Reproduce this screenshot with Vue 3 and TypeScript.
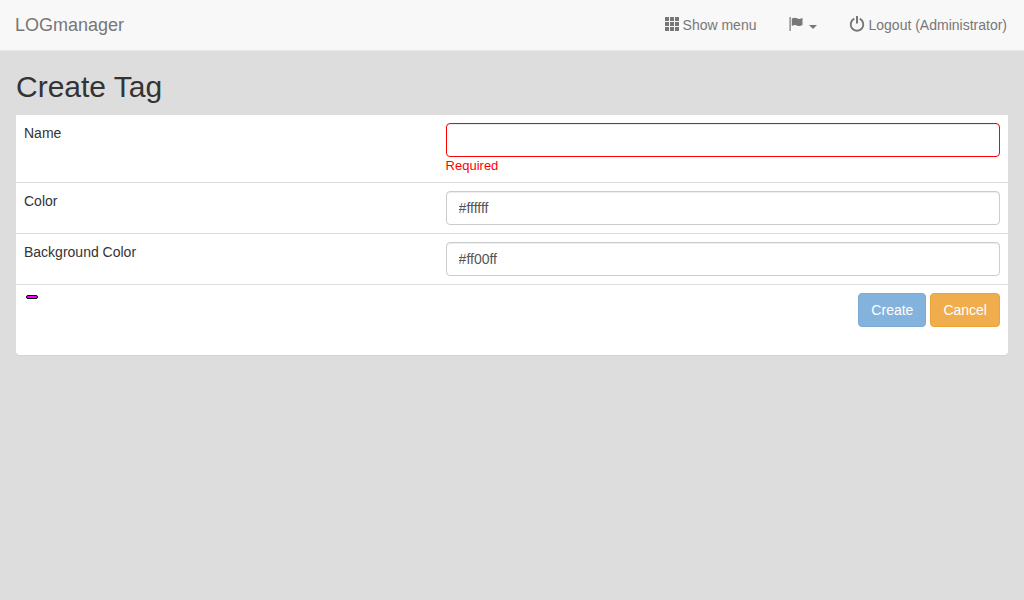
<script setup lang="ts">
import { computed, ref } from 'vue'

const name = ref('')
const color = ref('#ffffff')
const background = ref('#ff00ff')

const missingName = computed(() => name.value.trim() === '')

const cells = [0, 5, 10].flatMap((y) => [0, 5, 10].map((x) => ({ x, y })))
</script>

<template>
  <div class="page">
    <header class="navbar">
      <a class="brand" href="#">LOGmanager</a>
      <nav class="links">
        <a class="link" href="#menu">
          <svg class="icon" viewBox="0 0 14 14" aria-hidden="true" shape-rendering="crispEdges">
            <rect v-for="c in cells" :key="`${c.x}-${c.y}`" :x="c.x" :y="c.y" width="4" height="4" />
          </svg>
          <span>Show menu</span>
        </a>
        <a class="link" href="#language" aria-label="Language">
          <svg class="icon" viewBox="0 0 14 14" aria-hidden="true">
            <path d="M.5 0h1.200v14H.5z" />
            <path d="M2.800 1.500C5 .4 6.600 .5 8 1.300c1.500 .8 3.500 .8 5.500-.2v7c-2 1.200-4 1.200-5.600.4C6.400 7.700 5 7.800 2.800 9z" />
          </svg>
          <span class="caret"></span>
        </a>
        <a class="link" href="#logout">
          <svg class="icon" viewBox="0 0 14 14" aria-hidden="true">
            <path d="M4.300 1.700a6.300 6.300 0 1 0 5.400 0" fill="none" stroke="currentColor" stroke-width="1.900" />
            <path d="M6 -1h2v7.500H6z" />
          </svg>
          <span>Logout (Administrator)</span>
        </a>
      </nav>
    </header>

    <main class="content">
      <h1>Create Tag</h1>
      <form class="panel" novalidate @submit.prevent>
        <div class="row">
          <label for="tag-name">Name</label>
          <div class="field">
            <input id="tag-name" v-model="name" type="text" :class="{ invalid: missingName }" aria-describedby="name-error" />
            <span v-if="missingName" id="name-error" class="error">Required</span>
          </div>
        </div>
        <div class="row">
          <label for="tag-color">Color</label>
          <div class="field"><input id="tag-color" v-model="color" type="text" /></div>
        </div>
        <div class="row">
          <label for="tag-background">Background Color</label>
          <div class="field"><input id="tag-background" v-model="background" type="text" /></div>
        </div>
        <div class="row last">
          <div><span class="tag" :style="{ color, backgroundColor: background }">{{ name }}</span></div>
          <div class="actions">
            <button type="submit" class="primary" :disabled="missingName">Create</button>
            <button type="button" class="warning">Cancel</button>
          </div>
        </div>
      </form>
    </main>
  </div>
</template>

<style>
body {
  background: #ddd;
}
</style>

<style scoped>
.page,
.page * {
  box-sizing: border-box;
}
.page {
  font: 14px/20px "Liberation Sans", Arial, sans-serif;
  color: #333;
}
.navbar {
  display: flex;
  justify-content: space-between;
  background: #f8f8f8;
  border-bottom: 1px solid #e7e7e7;
}
.brand,
.link {
  padding: 15px;
  color: #777;
  text-decoration: none;
}
.brand {
  font-size: 18px;
}
.links {
  display: flex;
  gap: 3px;
  padding-right: 2px;
}
.link {
  display: flex;
  gap: 4px;
}
.icon {
  width: 14px;
  height: 14px;
  margin-top: 2px;
  fill: currentColor;
  overflow: visible;
}
.caret {
  align-self: center;
  margin: 4px 0 0 2px;
  border-top: 4px solid currentColor;
  border-left: 4px solid transparent;
  border-right: 4px solid transparent;
}
.content {
  padding: 20px 16px;
}
h1 {
  margin: 0 0 12px;
  font-size: 30px;
  line-height: 32px;
  font-weight: 400;
}
.panel {
  background: #fff;
  border-radius: 0 0 4px 4px;
  box-shadow: 0 1px 1px rgba(0, 0, 0, 0.05);
}
.row {
  display: grid;
  grid-template-columns: 17fr 23fr;
  border-bottom: 1px solid #ddd;
}
.row > * {
  padding: 8px;
}
.last {
  border-bottom: 0;
}
input {
  display: block;
  width: 100%;
  height: 34px;
  padding: 6px 12px;
  border: 1px solid #ccc;
  border-radius: 4px;
  background: #fff;
  box-shadow: inset 0 1px 1px rgba(0, 0, 0, 0.075);
  color: #555;
  font: inherit;
}
input.invalid {
  border-color: #f00;
}
.error {
  display: block;
  font-size: 13px;
  line-height: 17px;
  color: #f00;
}
.tag {
  display: block;
  width: fit-content;
  min-height: 4px;
  margin: 2px;
  padding: 1px 5px;
  border: 1px solid #000;
  border-radius: 3px;
  font-size: 12px;
  line-height: 12px;
}
.actions {
  display: flex;
  justify-content: flex-end;
  gap: 4px;
  padding-bottom: 28px;
}
button {
  height: 34px;
  padding: 6px 12px;
  border: 1px solid;
  border-radius: 4px;
  color: #fff;
  font: inherit;
}
.primary {
  background: #428bca;
  border-color: #357ebd;
}
.primary:disabled {
  opacity: 0.65;
}
.warning {
  background: #f0ad4e;
  border-color: #eea236;
}
</style>
